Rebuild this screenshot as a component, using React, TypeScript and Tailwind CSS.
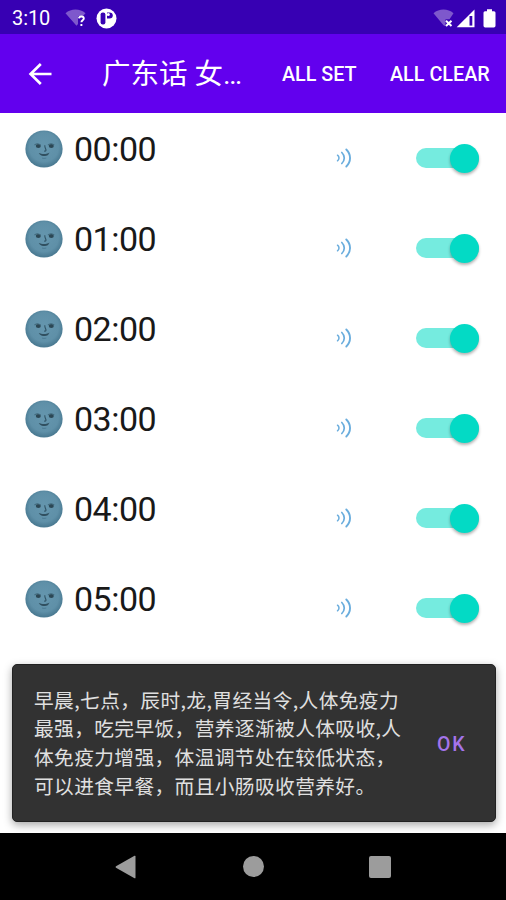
import { useState } from 'react';

const HOURS = ['00:00', '01:00', '02:00', '03:00', '04:00', '05:00'];

const MESSAGE = [
  '早晨,七点，辰时,龙,胃经当令,人体免疫力',
  '最强，吃完早饭，营养逐渐被人体吸收,人',
  '体免疫力增强，体温调节处在较低状态，',
  '可以进食早餐，而且小肠吸收营养好。',
];

const MoonFace = () => (
  <svg width="38" height="38" viewBox="0 0 38 38" aria-hidden="true">
    <defs>
      <radialGradient id="moon" cx="50%" cy="45%" r="52%">
        <stop offset="0%" stopColor="#6596ae" />
        <stop offset="75%" stopColor="#5f90a8" />
        <stop offset="100%" stopColor="#4b7b93" />
      </radialGradient>
    </defs>
    <circle cx="19" cy="19" r="18.6" fill="url(#moon)" />
    <ellipse cx="13.3" cy="15.9" rx="2.5" ry="2" fill="#2c4754" />
    <ellipse cx="26.3" cy="15.9" rx="2.5" ry="2" fill="#2c4754" />
    <path d="M9.5 15.2c1.500-1.800 4-2 6 0M23 15.2c1.700-2 4.400-1.800 6.200 0" fill="none" stroke="#40687b" strokeWidth="1.1" />
    <path d="M19.8 15.2c-.2 2 .9 3.600 1.200 4.800 0 1-.9 1.200-1.800 1.100" fill="none" stroke="#315466" strokeWidth="1.1" />
    <path d="M13.7 23c1.800.4 3.300 1.200 5.300 1.100 2.100.1 4-.5 5.500-1.500-.7 2.500-2.400 3.500-4.700 3.500-2.600 0-4.700-.8-6.100-3.100z" fill="#304f5f" />
    <path d="M17 28c1.300.5 3 .5 4.300 0" fill="none" stroke="#46748b" strokeWidth=".8" />
  </svg>
);

const SoundIcon = () => (
  <svg width="16" height="20" viewBox="0 0 16 20" fill="none" stroke="#6aaddd" strokeLinecap="round" aria-hidden="true">
    <path d="M1.500 7.200c2 1.600 2 4 0 5.600" strokeWidth="1.5" />
    <path d="M5.800 4.500c3.300 3.200 3.300 7.800 0 11" strokeWidth="1.7" />
    <path d="M10.300 1.500c5 5 5 12 0 17" strokeWidth="1.9" />
  </svg>
);

const StatusBar = () => (
  <div className="flex h-[34px] items-center bg-[#3700b3] text-white">
    <span className="ml-3 mt-0.5 w-[53px] text-[20px] leading-none tracking-[-0.1px]">3:10</span>
    <svg width="22" height="19" viewBox="0 0 22 19" className="mt-0.5" aria-hidden="true">
      <path d="M.5 4.200C6-.7 15-.7 20.500 4.200L18 7h-5v8l-1.500 1.700z" fill="#7e58cc" />
      <path d="M14 9.300c.2-2.400 4.800-2.300 4.800.2 0 1.700-2.300 1.900-2.400 3.700M16.400 15v2" stroke="#fff" strokeWidth="1.9" fill="none" />
    </svg>
    <svg width="21" height="21" viewBox="0 0 21 21" className="ml-[9px] mt-0.5" aria-hidden="true">
      <circle cx="10.5" cy="10.5" r="10" fill="#fff" />
      <rect x="4.6" y="4.400" width="4.800" height="12" rx="2.200" fill="#3700b3" />
      <path d="M11 4.400h2.400q3.400 0 3.400 3t-3.400 3H11z" fill="#3700b3" />
      <circle cx="12.300" cy="6.400" r="1.500" fill="#fff" />
    </svg>
    <div className="ml-auto mr-[10px] mt-0.5 flex items-center">
      <svg width="21" height="19" viewBox="0 0 21 19" aria-hidden="true">
        <path d="M.5 4.200C6-.7 15-.7 20.500 4.200l-4 6h-4v7l-2-1z" fill="#7e58cc" />
        <path d="M13 11.800l5.500 5.200M18.500 11.800L13 17" stroke="#fff" strokeWidth="2" />
      </svg>
      <svg width="19" height="19" viewBox="0 0 19 19" className="ml-0.5" aria-hidden="true">
        <path d="M18.500.5v17.800H.7z" fill="#fff" />
        <path d="M13.500 7h2.800v9.600h-2.800z" fill="#3700b3" />
      </svg>
      <svg width="13" height="19" viewBox="0 0 13 19" className="ml-2" aria-hidden="true">
        <path d="M4 .3h5v2h2q1.500 0 1.500 1.500v13q0 1.700-1.700 1.700H2.200Q.5 18.500.5 16.800v-13Q.5 2.300 2 2.300h2z" fill="#fff" />
      </svg>
    </div>
  </div>
);

const AppBar = ({ onSet, onClear }: { onSet: () => void; onClear: () => void }) => (
  <header className="flex h-[79px] items-center bg-[#6200ee] text-white">
    <button aria-label="Back" className="ml-7">
      <svg width="24" height="24" viewBox="0 0 24 24" fill="none" stroke="currentColor" strokeWidth="2.7">
        <path d="M23.500 12H3M12.800 2L2.600 12l10.200 10" />
      </svg>
    </button>
    <h1 className="ml-[50px] mt-[3px] w-[180px] whitespace-nowrap text-[28.5px] font-normal leading-none">广东话 女…</h1>
    <button onClick={onSet} className="mt-0.5 w-[74px] whitespace-nowrap text-left text-[19.7px] font-medium">ALL SET</button>
    <button onClick={onClear} className="ml-[34px] mt-0.5 whitespace-nowrap text-[19.8px] font-medium">ALL CLEAR</button>
  </header>
);

interface RowProps {
  hour: string;
  checked: boolean;
  onToggle: () => void;
}

const HourRow = ({ hour, checked, onToggle }: RowProps) => (
  <li className="flex h-[90px] items-start pl-[25px] pr-[27px]">
    <div className="mt-[17px] flex h-[38px] items-center">
      <MoonFace />
      <span className="ml-[11px] text-[34px] leading-none tracking-[-0.5px] text-[#191919]">{hour}</span>
    </div>
    <div className="ml-auto mt-[30px] flex h-[30px] items-center">
      <SoundIcon />
      <button
        role="switch"
        aria-checked={checked}
        aria-label={hour}
        onClick={onToggle}
        className="ml-[64px] flex h-[20px] w-[63px] items-center rounded-full bg-[#75ebdf]"
      >
        <span className={`h-[29px] w-[29px] shrink-0 rounded-full bg-[#03dac5] shadow-[0_2px_3px_rgba(0,0,0,0.3)] ${checked ? 'ml-auto' : ''}`} />
      </button>
    </div>
  </li>
);

const Snackbar = () => (
  <div className="absolute left-3 top-[664px] flex h-[158px] w-[484px] items-center rounded-[5px] border border-[#222222] bg-[#323232] shadow-[0_3px_8px_rgba(0,0,0,0.35)]">
    <p className="ml-[21px] w-[370px] whitespace-nowrap text-[19.7px] leading-[28.7px] tracking-[0.4px] text-[#e0e0e0] [font-family:'Noto_Sans_CJK_SC',sans-serif]">
      {MESSAGE.map((line) => (
        <span key={line} className="block">{line}</span>
      ))}
    </p>
    <button className="ml-[33px] mt-[3px] text-[19.5px] font-medium tracking-[1.8px] text-[#a474ea]">OK</button>
  </div>
);

const NavBar = () => (
  <nav className="flex h-[67px] items-center bg-black">
    <svg width="21" height="24" viewBox="0 0 21 24" className="ml-[115px]" fill="#9c9c9c" aria-hidden="true">
      <path d="M19.500.8q1-.5 1 .7v21q0 1.200-1 .7L1 12.700Q0 12 1 11.300z" />
    </svg>
    <div className="ml-[107px] h-[21px] w-[21px] rounded-full bg-[#9c9c9c]" />
    <div className="ml-[105px] h-[22px] w-[22px] rounded-[2px] bg-[#9c9c9c]" />
  </nav>
);

export default function App() {
  const [enabled, setEnabled] = useState<boolean[]>(HOURS.map(() => true));

  return (
    <div className="relative flex h-[900px] w-[506px] flex-col overflow-hidden bg-white [font-family:Roboto,'Noto_Sans_CJK_SC',sans-serif]">
      <StatusBar />
      <AppBar onSet={() => setEnabled(HOURS.map(() => true))} onClear={() => setEnabled(HOURS.map(() => false))} />
      <ul className="h-[720px] overflow-hidden">
        {HOURS.map((hour, i) => (
          <HourRow
            key={hour}
            hour={hour}
            checked={enabled[i]}
            onToggle={() => setEnabled(enabled.map((on, j) => (j === i ? !on : on)))}
          />
        ))}
      </ul>
      <Snackbar />
      <NavBar />
    </div>
  );
}
